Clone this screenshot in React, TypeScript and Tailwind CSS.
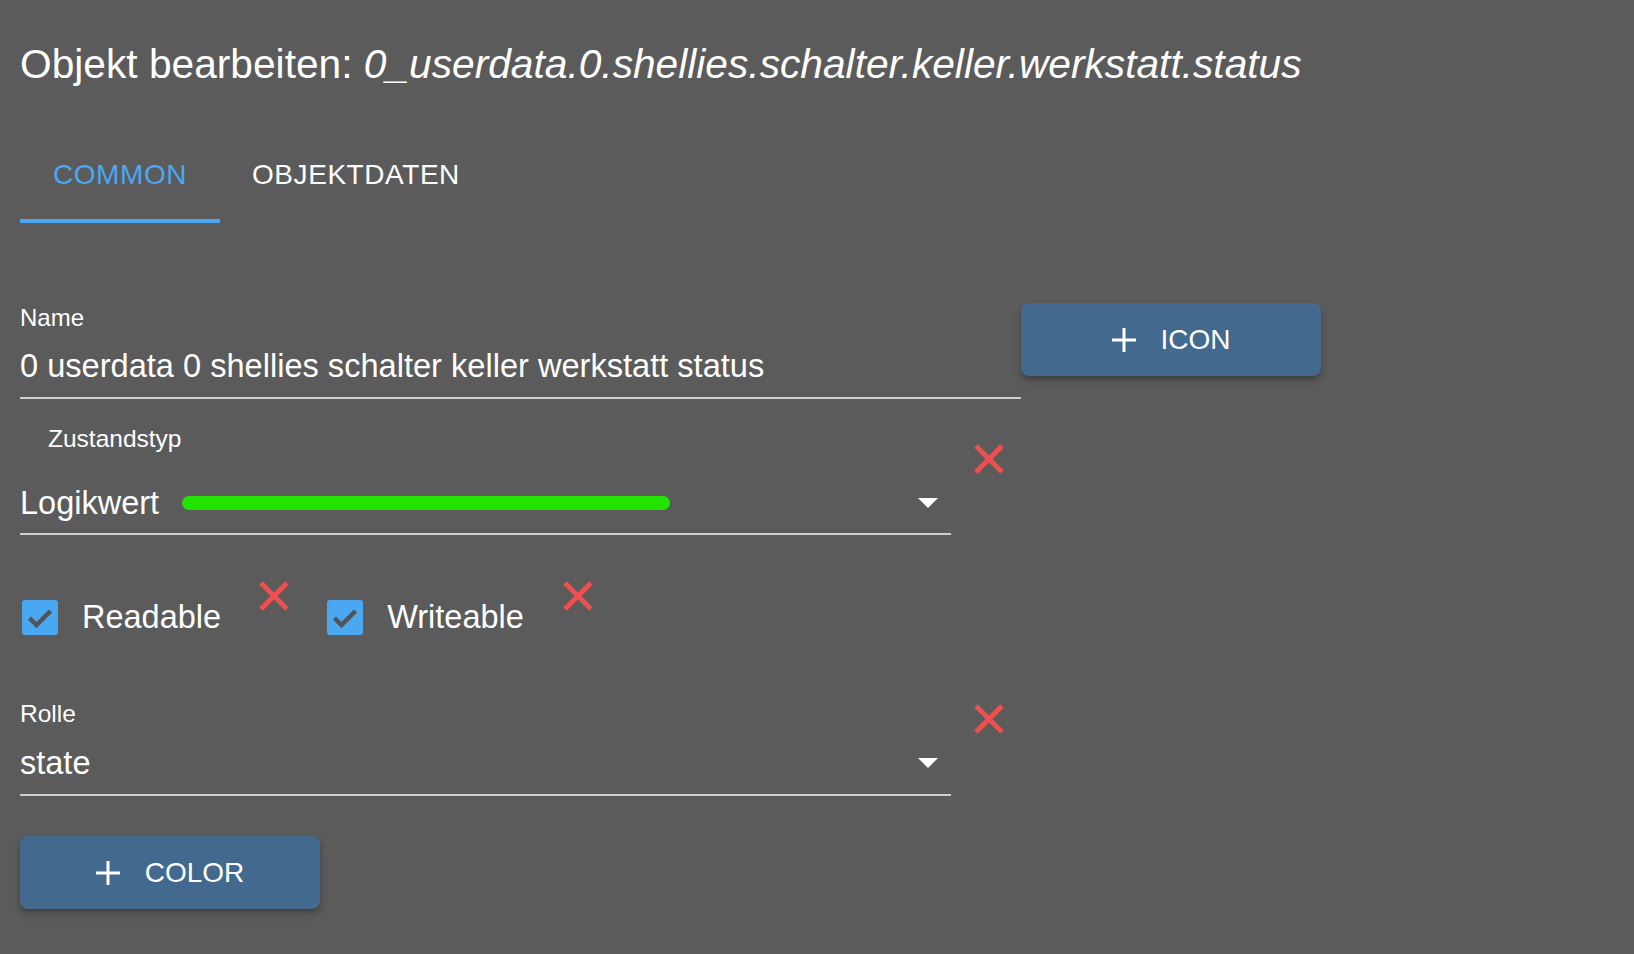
import React from "react";

const PlusIcon = () => (
  <svg width="24" height="24" viewBox="0 0 24 24" className="shrink-0">
    <rect x="10.5" y="0" width="3" height="24" fill="#ffffff" />
    <rect x="0" y="10.5" width="24" height="3" fill="#ffffff" />
  </svg>
);

const RedX = () => (
  <svg width="32" height="32" viewBox="0 0 32 32" className="shrink-0">
    <path d="M3 3 L29 29 M29 3 L3 29" stroke="#ee4f4f" strokeWidth="5" />
  </svg>
);

const Arrow = () => (
  <svg width="20" height="10" viewBox="0 0 20 10" className="shrink-0">
    <path d="M0 0 L20 0 L10 10 Z" fill="#ffffff" />
  </svg>
);

const Checkbox = () => (
  <div className="w-[36px] h-[35px] rounded-[3px] bg-[#4aa8f2] flex items-center justify-center shrink-0">
    <svg width="30" height="30" viewBox="0 0 30 30">
      <path d="M4.5 15 L11.5 22 L25.5 8" stroke="#535353" strokeWidth="4.5" fill="none" />
    </svg>
  </div>
);

const ActionButton: React.FC<{ label: string }> = ({ label }) => (
  <button className="w-[300px] h-[73px] rounded-[8px] bg-[#44698f] flex items-center justify-center gap-[25px] text-white text-[28px] shadow-[0_3px_5px_-1px_rgba(0,0,0,0.25),0_5px_8px_0_rgba(0,0,0,0.14)]">
    <PlusIcon />
    <span className="leading-none">{label}</span>
  </button>
);

export default function App() {
  return (
    <div
      className="min-h-screen w-full bg-[#5b5b5b] text-white pl-[20px]"
      style={{ fontFamily: '"Liberation Sans", Arial, sans-serif' }}
    >
      <div className="h-[127px] pt-[2px] flex items-center">
        <h1 className="text-[40.7px] leading-none font-normal">
          Objekt bearbeiten: <span className="italic">0_userdata.0.shellies.schalter.keller.werkstatt.status</span>
        </h1>
      </div>

      <div className="h-[96px] flex">
        <div className="relative h-full px-[33px] flex items-center text-[28px] text-[#4aa8f2] tracking-[0.02em]">
          COMMON
          <div className="absolute left-0 right-0 bottom-0 h-[4px] bg-[#4aa8f2]" />
        </div>
        <div className="h-full px-[32px] flex items-center text-[28px] tracking-[0.02em]">
          OBJEKTDATEN
        </div>
      </div>

      <div className="mt-[77px] flex items-start">
        <div className="w-[1001px]">
          <div className="h-[36px] flex items-center text-[24px]">Name</div>
          <div className="h-[63px] pb-[1px] flex items-center text-[32.6px] border-b-2 border-[#cfcfcf]">
            0 userdata 0 shellies schalter keller werkstatt status
          </div>
        </div>
        <div className="mt-[3px]">
          <ActionButton label="ICON" />
        </div>
      </div>

      <div className="mt-[21px] flex items-start">
        <div className="w-[931px]">
          <div className="h-[38px] pl-[28px] flex items-center text-[24.5px]">Zustandstyp</div>
          <div className="mt-[15px] h-[62px] flex items-center border-b-2 border-[#cfcfcf]">
            <span className="text-[32.5px]">Logikwert</span>
            <div className="ml-[23px] w-[488px] h-[14px] rounded-full bg-[#22e400]" />
            <div className="ml-auto mr-[13px]">
              <Arrow />
            </div>
          </div>
        </div>
        <div className="ml-[22px] mt-[23px]">
          <RedX />
        </div>
      </div>

      <div className="mt-[45px] h-[75px] flex items-start">
        <div className="h-full flex items-center ml-[2px]">
          <Checkbox />
          <span className="ml-[24px] text-[32.5px]">Readable</span>
        </div>
        <div className="ml-[37px]">
          <RedX />
        </div>
        <div className="h-full flex items-center ml-[37px]">
          <Checkbox />
          <span className="ml-[24px] text-[32.5px]">Writeable</span>
        </div>
        <div className="ml-[38px]">
          <RedX />
        </div>
      </div>

      <div className="mt-[41px] flex items-start">
        <div className="w-[931px]">
          <div className="h-[36px] flex items-center text-[24.5px]">Rolle</div>
          <div className="h-[64px] flex items-center border-b-2 border-[#cfcfcf]">
            <span className="text-[32.5px]">state</span>
            <div className="ml-auto mr-[13px]">
              <Arrow />
            </div>
          </div>
        </div>
        <div className="ml-[22px] mt-[7px]">
          <RedX />
        </div>
      </div>

      <div className="mt-[40px] pb-[45px]">
        <ActionButton label="COLOR" />
      </div>
    </div>
  );
}
